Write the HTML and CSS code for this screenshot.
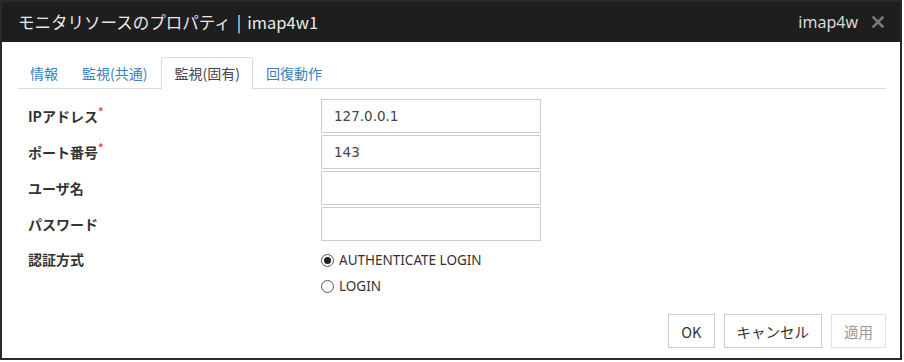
FILE: index.html
```html
<!DOCTYPE html>
<html>
    <head>
        <title>モニタリソースのプロパティ</title>
        <link rel="stylesheet" href="styles.css">
    </head>
    <body>
        <div class="dialog">
            <div class="dialog-header">
                <span class="dialog-title">モニタリソースのプロパティ<span class="title-sep">|</span>imap4w1</span>
                <span class="dialog-name">imap4w</span>
                <span class="close-button">
                    <svg width="12" height="12" viewBox="0 0 12 12">
                        <path d="M1.5 1.5 L10.5 10.5 M10.5 1.5 L1.5 10.5" stroke="#7a7a7a" stroke-width="2.6" stroke-linecap="square"/>
                    </svg>
                </span>
            </div>

            <div class="dialog-body">
                <ul class="tabs">
                    <li>情報</li>
                    <li>監視(共通)</li>
                    <li class="active">監視(固有)</li>
                    <li>回復動作</li>
                </ul>

                <div class="form">
                    <div class="form-row">
                        <label>IPアドレス<span class="required">*</span></label>
                        <div class="text-box">127.0.0.1</div>
                    </div>
                    <div class="form-row">
                        <label>ポート番号<span class="required">*</span></label>
                        <div class="text-box">143</div>
                    </div>
                    <div class="form-row">
                        <label>ユーザ名</label>
                        <div class="text-box"></div>
                    </div>
                    <div class="form-row">
                        <label>パスワード</label>
                        <div class="text-box"></div>
                    </div>
                    <div class="form-row radio-row">
                        <label>認証方式</label>
                        <div class="radio-group">
                            <div class="radio checked"><span class="radio-mark"></span>AUTHENTICATE LOGIN</div>
                            <div class="radio"><span class="radio-mark"></span>LOGIN</div>
                        </div>
                    </div>
                </div>

                <div class="dialog-buttons">
                    <button class="ok">OK</button>
                    <button>キャンセル</button>
                    <button class="disabled">適用</button>
                </div>
            </div>
        </div>
    </body>
</html>
```

FILE: styles.css
```css
body {
    margin: 0;
    background: #fff;
    font-family: "Noto Sans CJK JP", "Noto Sans", sans-serif;
    color: #333;
}
.dialog {
    width: 898px;
    height: 356px;
    border: 2px solid #2a2a2a;
    background: #fff;
    display: flex;
    flex-direction: column;
}
.dialog-header {
    height: 40px;
    background: #1e1e1e;
    display: flex;
    align-items: center;
    padding: 0 16px 0 16px;
    color: #e8e8e8;
}
.dialog-title {
    font-size: 16.5px;
    flex: 1;
}
.title-sep {
    padding: 0 6px;
}
.dialog-name {
    font-size: 16px;
    color: #d8d8d8;
    margin-right: 14px;
    font-family: "Noto Sans", sans-serif;
}
.close-button {
    display: flex;
    width: 12px;
    height: 12px;
}
.dialog-body {
    flex: 1;
    display: flex;
    flex-direction: column;
    padding: 0 14px 0 16px;
}
.tabs {
    list-style: none;
    margin: 15px 0 0 0;
    padding: 0;
    display: flex;
    border-bottom: 1px solid #ddd;
    height: 31px;
}
.tabs li {
    font-size: 14px;
    color: #3a7fc0;
    padding: 0 11px;
    line-height: 31px;
    border: 1px solid transparent;
    border-bottom: none;
}
.tabs li.active {
    color: #444;
    border-color: #ddd;
    background: #fff;
    height: 32px;
    padding: 0 12px;
    margin-left: 2px;
    border-radius: 2px 2px 0 0;
}
.tabs li.active + li {
    padding-left: 12px;
}
.form {
    padding: 10px 0 0 10px;
}
.form-row {
    display: flex;
    align-items: center;
    margin-bottom: 2px;
}
.form-row label {
    width: 293px;
    font-size: 14px;
    font-weight: bold;
    color: #333;
}
.required {
    color: #d9534f;
    font-size: 11px;
    vertical-align: top;
    position: relative;
    top: -3px;
}
.text-box {
    width: 199px;
    height: 32px;
    border: 1px solid #ccc;
    padding: 0 7px 0 12px;
    font-size: 13.5px;
    line-height: 32px;
    font-family: "DejaVu Sans", sans-serif;
    color: #444;
}
.radio-row {
    align-items: flex-start;
    margin-top: 6px;
}
.radio-row label {
    line-height: 24px;
}
.radio-group {
    display: flex;
    flex-direction: column;
}
.radio {
    display: flex;
    align-items: center;
    height: 26px;
    font-size: 13.5px;
    color: #333;
    font-family: "Noto Sans", sans-serif;
}
.radio-mark {
    width: 11px;
    height: 11px;
    border: 1px solid #555;
    border-radius: 50%;
    margin-right: 5px;
    position: relative;
}
.radio.checked .radio-mark::after {
    content: "";
    position: absolute;
    left: 2px;
    top: 2px;
    width: 7px;
    height: 7px;
    border-radius: 50%;
    background: #222;
}
.dialog-buttons {
    display: flex;
    justify-content: flex-end;
    gap: 9px;
    margin-top: auto;
    margin-bottom: 10px;
}
.dialog-buttons button {
    height: 34px;
    padding: 0 12px;
    background: #fff;
    border: 1px solid #ccc;
    font-family: "Noto Sans CJK JP", "Noto Sans", sans-serif;
    font-size: 14.5px;
    color: #333;
}
.dialog-buttons button.ok {
    min-width: 45px;
}
.dialog-buttons button.disabled {
    color: #999;
    border-color: #e0e0e0;
    padding: 0 12px;
}
```
